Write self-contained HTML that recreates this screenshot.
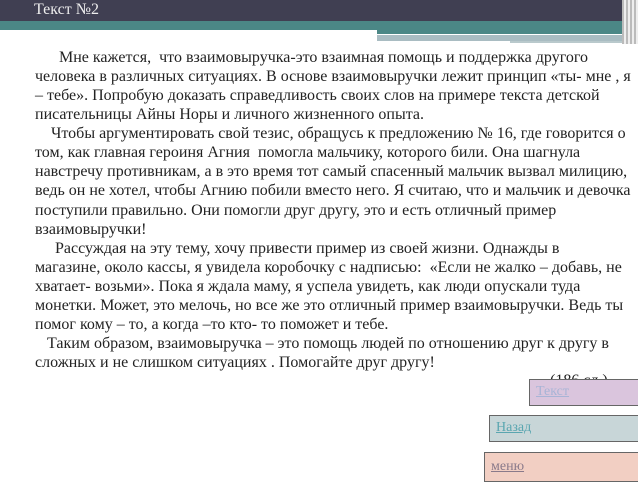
<!DOCTYPE html>
<html><head><meta charset="utf-8"><style>
body{margin:0;width:638px;height:479px;overflow:hidden;background:#fff;position:relative;font-family:"Liberation Serif",serif}
.hd{position:absolute;left:0;top:0;width:638px;height:22px;background:#403f52}
.tl{position:absolute;left:0;top:21px;width:638px;height:9px;background:#4b8786}
.t{position:absolute;left:34px;top:1px;color:#eee;font-size:16px}
.b1{position:absolute;left:377px;top:30px;width:245px;height:4px;background:#4b8786}
.b2{position:absolute;left:377px;top:35px;width:245px;height:6px;background:#a9bcc2}
.b3{position:absolute;left:510px;top:41px;width:112px;height:2px;background:#b9c9cc}
.rs{position:absolute;left:622px;top:0;width:16px;height:44px;background:repeating-linear-gradient(90deg,#bbb 0 2px,#eee 2px 4px)}
.tx{position:absolute;left:35px;top:48px;font-size:16px;line-height:19.06px;color:#222;white-space:nowrap}
.btn{position:absolute;border:1px solid #666;font-size:14px;padding-left:6px;box-sizing:border-box;line-height:24px;text-decoration:underline}
</style></head><body>
<div class="hd"></div><div class="tl"></div><div class="t">Текст №2</div>
<div class="b1"></div><div class="b2"></div><div class="b3"></div><div class="rs"></div>
<div class="tx">
&nbsp;&nbsp;&nbsp;&nbsp;&nbsp;&nbsp;Мне кажется,&nbsp; что взаимовыручка-это взаимная помощь и поддержка другого<br>
человека в различных ситуациях. В основе взаимовыручки лежит принцип «ты- мне , я<br>
– тебе». Попробую доказать справедливость своих слов на примере текста детской<br>
писательницы Айны Норы и личного жизненного опыта.<br>
&nbsp;&nbsp;&nbsp;&nbsp;Чтобы аргументировать свой тезис, обращусь к предложению № 16, где говорится о<br>
том, как главная героиня Агния&nbsp; помогла мальчику, которого били. Она шагнула<br>
навстречу противникам, а в это время тот самый спасенный мальчик вызвал милицию,<br>
ведь он не хотел, чтобы Агнию побили вместо него. Я считаю, что и мальчик и девочка<br>
поступили правильно. Они помогли друг другу, это и есть отличный пример<br>
взаимовыручки!<br>
&nbsp;&nbsp;&nbsp;&nbsp;&nbsp;Рассуждая на эту тему, хочу привести пример из своей жизни. Однажды в<br>
магазине, около кассы, я увидела коробочку с надписью:&nbsp; «Если не жалко – добавь, не<br>
хватает- возьми». Пока я ждала маму, я успела увидеть, как люди опускали туда<br>
монетки. Может, это мелочь, но все же это отличный пример взаимовыручки. Ведь ты<br>
помог кому – то, а когда –то кто- то поможет и тебе.<br>
&nbsp;&nbsp;&nbsp;Таким образом, взаимовыручка – это помощь людей по отношению друг к другу в<br>
сложных и не слишком ситуациях . Помогайте друг другу!<br>
<span style="position:relative;left:515px;top:-1px">(186 сл.)</span>
</div>
<div class="btn" style="left:529px;top:379px;width:112px;height:27px;background:#dac5dd;color:#a8b4d6">Текст</div>
<div class="btn" style="left:489px;top:415px;width:152px;height:27px;background:#c8d6d8;color:#5aa6b0">Назад</div>
<div class="btn" style="left:484px;top:452px;width:157px;height:30px;background:#f2cfc3;color:#8a7a8a;line-height:28px">меню</div>
</body></html>
